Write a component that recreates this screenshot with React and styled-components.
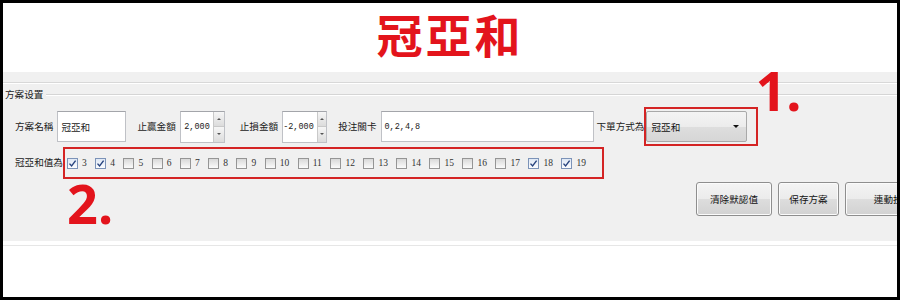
import React from 'react';
import styled, { createGlobalStyle } from 'styled-components';

const GlobalStyle = createGlobalStyle`
  body {
    margin: 0;
    background: #fff;
  }
`;

const Frame = styled.div`
  width: 900px;
  height: 300px;
  box-sizing: border-box;
  padding: 3px;
  background: #000;
`;

const Canvas = styled.div`
  height: 100%;
  background: #fff;
  overflow: hidden;
  display: flex;
  flex-direction: column;
  font-family: "Noto Sans CJK TC", "Noto Sans", sans-serif;
`;

const Title = styled.h1`
  margin: 0;
  height: 69px;
  box-sizing: border-box;
  padding-bottom: 7px;
  display: flex;
  align-items: center;
  justify-content: center;
  font-size: 46px;
  font-weight: 700;
  line-height: 1.3;
  letter-spacing: 3px;
  color: #e3141c;
`;

const Panel = styled.section`
  flex: none;
  width: 947px;
  height: 169px;
  box-sizing: border-box;
  background: #f0f0f0;
`;

const TopStrip = styled.div`
  height: 10px;
  border-bottom: 1px solid #d8d8d8;
  box-shadow: 0 1px 0 #fff;
`;

const GroupHeader = styled.div`
  display: flex;
  align-items: center;
  gap: 3px;
  height: 12px;
  margin-top: 5px;
  padding-left: 2px;
  font-size: 9.6px;
  color: #1a1a1a;
  .group__line {
    flex: 1;
    height: 1px;
    background: #d5d5d5;
    box-shadow: 0 1px 0 #fff;
  }
`;

const Row = styled.div`
  display: flex;
  align-items: center;
  padding-left: 12px;
  margin-top: ${(p) => p.$mt}px;
`;

const FieldLabel = styled.span`
  font-size: 9.6px;
  line-height: 1;
  color: #1a1a1a;
  white-space: nowrap;
  margin-left: ${(p) => p.$ml || 0}px;
  margin-right: ${(p) => (p.$mr === undefined ? 4 : p.$mr)}px;
`;

const TextBox = styled.div`
  width: ${(p) => p.$w}px;
  height: 31px;
  box-sizing: border-box;
  border: 1px solid #bfc1c6;
  border-top-color: #a3a5aa;
  background: #fff;
  display: flex;
  align-items: center;
  padding: 0 3px;
  color: #222;
  font-family: ${(p) =>
    p.$mono ? '"Liberation Mono", monospace' : '"Noto Sans CJK TC", sans-serif'};
  font-size: ${(p) => (p.$mono ? 8.5 : 9.6)}px;
`;

const Spinner = styled.div`
  width: 45px;
  height: 32px;
  box-sizing: border-box;
  border: 1px solid #bfc1c6;
  border-top-color: #a3a5aa;
  background: #fff;
  display: flex;
  .spin__value {
    flex: 1;
    display: flex;
    align-items: center;
    justify-content: flex-end;
    padding-right: 3px;
    font-family: "Liberation Mono", monospace;
    font-size: 8.5px;
    color: #222;
  }
  .spin__col {
    width: 10px;
    display: flex;
    flex-direction: column;
    border-left: 1px solid #c9c9c9;
  }
`;

const SpinButton = styled.div`
  flex: 1;
  display: flex;
  align-items: center;
  justify-content: center;
  background: linear-gradient(#f6f6f6, #dcdcdc);
  border-top: ${(p) => (p.$down ? '1px solid #c9c9c9' : 'none')};
  &::after {
    content: '';
    border-left: 2px solid transparent;
    border-right: 2px solid transparent;
    ${(p) => (p.$down ? 'border-top: 2px solid #555;' : 'border-bottom: 2px solid #555;')}
  }
`;

const Highlight = styled.div`
  position: relative;
  border: 2px solid #d42424;
  padding: 2px 9px 2px 0;
`;

const Callout = styled.span`
  position: absolute;
  left: 100%;
  top: -46px;
  margin-left: -1px;
  font-family: "Noto Sans", sans-serif;
  font-size: 54px;
  font-weight: 700;
  line-height: 54px;
  color: #e3141c;
  white-space: nowrap;
`;

const Select = styled.div`
  width: 101px;
  height: 31px;
  box-sizing: border-box;
  border: 1px solid #a9a9a9;
  border-radius: 2px;
  background: linear-gradient(#f4f4f4 0%, #ececec 50%, #dedede 51%, #d6d6d6 100%);
  display: flex;
  align-items: center;
  justify-content: space-between;
  padding: 0 7px 0 4px;
  font-size: 9.6px;
  color: #111;
  &::after {
    content: '';
    border-left: 3px solid transparent;
    border-right: 3px solid transparent;
    border-top: 3px solid #111;
  }
`;

const CheckGroup = styled.div`
  display: flex;
  align-items: center;
  height: 32px;
  box-sizing: border-box;
  border: 2px solid #d42424;
  padding: 0 8px 0 2px;
`;

const CheckItem = styled.label`
  display: flex;
  align-items: center;
  gap: 4px;
  margin-right: 8.5px;
  font-family: "Liberation Serif", serif;
  font-size: 9.5px;
  color: #333;
`;

const Box = styled.span`
  flex: none;
  width: 11px;
  height: 11px;
  box-sizing: border-box;
  border: 1px solid ${(p) => (p.$checked ? '#7c93b8' : '#959595')};
  background: ${(p) =>
    p.$checked ? 'linear-gradient(#dfe8f5, #fbfcfe)' : 'linear-gradient(#d9d9d9, #fbfbfb)'};
  display: flex;
  align-items: center;
  justify-content: center;
`;

const BottomRow = styled.div`
  display: flex;
  align-items: flex-start;
  height: 42px;
  margin-top: 3px;
  padding-left: 64px;
  .bottom__mark {
    font-family: "Noto Sans", sans-serif;
    font-size: 54px;
    font-weight: 700;
    line-height: 42px;
    color: #e3141c;
  }
`;

const Buttons = styled.div`
  display: flex;
  gap: 6px;
  margin-left: auto;
  padding-right: 9px;
`;

const Button = styled.button`
  width: ${(p) => p.$w}px;
  height: 34px;
  border: 1px solid #8e8e8e;
  border-radius: 3px;
  box-shadow: inset 0 0 0 1px #fbfbfb;
  background: linear-gradient(#f4f4f4 0%, #ebebeb 50%, #dddddd 51%, #d2d2d2 100%);
  font-family: "Noto Sans CJK TC", sans-serif;
  font-size: 9.6px;
  color: #111;
  padding: 0;
`;

const Rule = styled.div`
  height: 1px;
  margin-top: 4px;
  background: #e6e6e6;
`;

const nums = [3, 4, 5, 6, 7, 8, 9, 10, 11, 12, 13, 14, 15, 16, 17, 18, 19];
const checked = [3, 4, 18, 19];

function Check({ on }) {
  return (
    <Box $checked={on}>
      {on && (
        <svg width="9" height="9" viewBox="0 0 9 9">
          <path d="M1.5 4.6 L3.6 7 L7.6 1.6" fill="none" stroke="#27437e" strokeWidth="1.4" />
        </svg>
      )}
    </Box>
  );
}

export default function App() {
  return (
    <>
      <GlobalStyle />
      <Frame>
        <Canvas>
          <Title>冠亞和</Title>
          <Panel>
            <TopStrip />
            <GroupHeader>
              <span>方案设置</span>
              <div className="group__line" />
            </GroupHeader>

            <Row $mt={7}>
              <FieldLabel>方案名稱</FieldLabel>
              <TextBox $w={69}>冠亞和</TextBox>
              <FieldLabel $ml={11}>止贏金額</FieldLabel>
              <Spinner>
                <div className="spin__value">2,000</div>
                <div className="spin__col">
                  <SpinButton />
                  <SpinButton $down />
                </div>
              </Spinner>
              <FieldLabel $ml={15}>止損金額</FieldLabel>
              <Spinner>
                <div className="spin__value">-2,000</div>
                <div className="spin__col">
                  <SpinButton />
                  <SpinButton $down />
                </div>
              </Spinner>
              <FieldLabel $ml={11}>投注關卡</FieldLabel>
              <TextBox $w={213} $mono>0,2,4,8</TextBox>
              <FieldLabel $ml={3} $mr={0}>下單方式為</FieldLabel>
              <Highlight>
                <Select>冠亞和</Select>
                <Callout>1.</Callout>
              </Highlight>
            </Row>

            <Row $mt={1}>
              <FieldLabel $mr={0}>冠亞和值為</FieldLabel>
              <CheckGroup>
                {nums.map((n) => (
                  <CheckItem key={n}>
                    <Check on={checked.includes(n)} />
                    <span>{n}</span>
                  </CheckItem>
                ))}
              </CheckGroup>
            </Row>

            <BottomRow>
              <span className="bottom__mark">2.</span>
              <Buttons>
                <Button $w={76}>清除默認值</Button>
                <Button $w={61}>保存方案</Button>
                <Button $w={96}>連動投注</Button>
              </Buttons>
            </BottomRow>
          </Panel>
          <Rule />
        </Canvas>
      </Frame>
    </>
  );
}
